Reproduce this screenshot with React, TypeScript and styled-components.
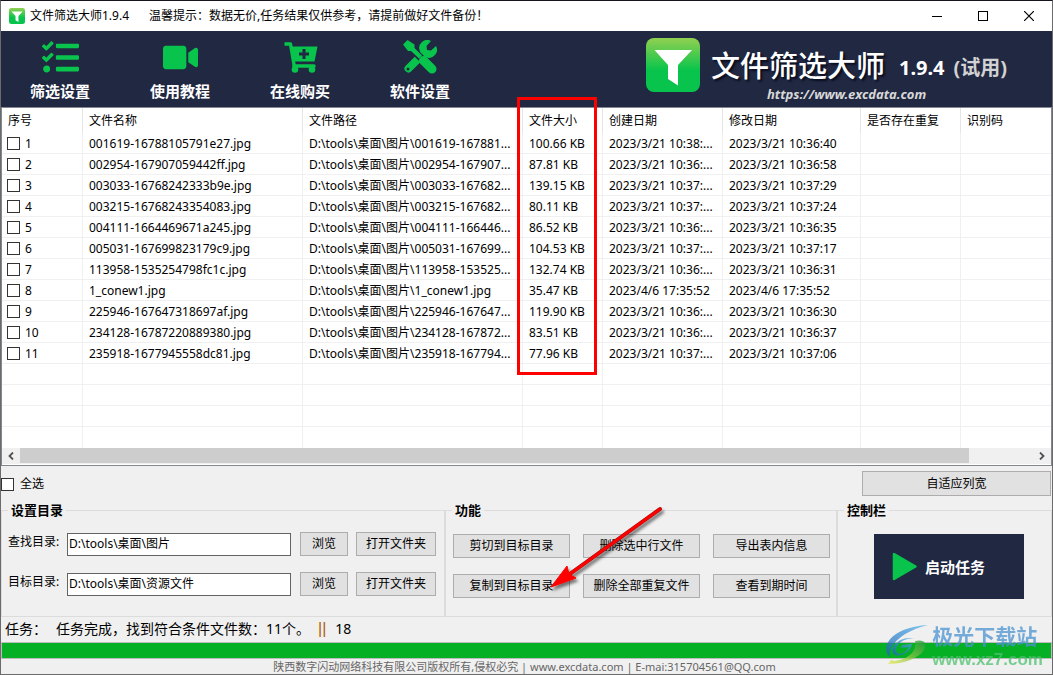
import React from 'react';
import styled, { createGlobalStyle } from 'styled-components';
import { FaTasks, FaVideo } from 'react-icons/fa';

const GlobalStyle = createGlobalStyle`
  *, *::before, *::after { box-sizing: border-box; }
  html, body { margin: 0; padding: 0; background: #f0f0f0; }
  body, button, input {
    font-family: "Noto Sans", "Noto Sans CJK SC", sans-serif;
    font-size: 12px;
    line-height: 16px;
    color: #000;
  }
`;

const NAVY = '#212842';
const GREEN = '#08c44c';

const Window = styled.div`
  position: relative;
  display: flex;
  flex-direction: column;
  min-height: 100vh;
  min-width: 1024px;
  overflow: hidden;
  border: 1px solid #6b6b6b;
  border-top-color: #15141c;
  background: #f0f0f0;
`;

const TitleBar = styled.header`
  display: flex;
  align-items: center;
  height: 30px;
  padding-left: 8px;
  background: #fff;
`;

const TitleText = styled.h1`
  margin: 0 0 0 5px;
  font-size: 12px;
  font-weight: 400;
`;

const Hint = styled.p`
  flex: 1;
  margin: 0 0 0 20px;
`;

const WindowButton = styled.button`
  display: grid;
  place-items: center;
  width: 46px;
  height: 30px;
  padding: 0;
  border: 0;
  background: transparent;
`;

const Toolbar = styled.div`
  display: flex;
  height: 76px;
  background: ${NAVY};
`;

const Tools = styled.nav`
  display: flex;
  flex: 1;
`;

const ToolButton = styled.button`
  display: flex;
  flex-direction: column;
  align-items: center;
  width: 120px;
  padding: 8px 2px 0 0;
  border: 0;
  background: transparent;
  color: #fff;
  font-size: 15px;
  font-weight: 700;
  line-height: 20px;
`;

const ToolIcon = styled.span`
  display: grid;
  place-items: center;
  height: 36px;
  margin-bottom: 6px;
  color: ${GREEN};
  svg { display: block; }
`;

const Brand = styled.div`
  display: flex;
  gap: 11px;
  width: 406px;
  padding-top: 7px;
`;

const BrandText = styled.div`
  display: flex;
  flex-direction: column;
  padding-top: 7px;
`;

const BrandLine = styled.div`
  display: flex;
  align-items: center;
  gap: 9px;
  height: 42px;
  white-space: nowrap;
`;

const BrandName = styled.span`
  width: 179px;
  font-size: 29px;
  line-height: 36px;
  color: #fff;
  font-weight: 500;
  text-shadow: 2px 2px 2px #0a0e1c;
`;

const Version = styled.strong<{ $dim?: boolean }>`
  padding-top: 4px;
  font-size: 20px;
  line-height: 28px;
  color: ${(p) => (p.$dim ? '#d2d2d2' : '#fff')};
`;

const SiteLink = styled.a`
  margin-left: 56px;
  font-size: 13px;
  font-weight: 700;
  font-style: italic;
  line-height: 14px;
  color: #d8d8d8;
  text-decoration: none;
`;

const ListView = styled.section`
  display: flex;
  flex-direction: column;
  border: 1px solid #828790;
  padding-bottom: 1px;
  background: #fff;
`;

const FileTable = styled.table`
  width: 100%;
  table-layout: fixed;
  border-collapse: separate;
  border-spacing: 0;
`;

const HeadCell = styled.th`
  height: 25px;
  padding: 0 6px;
  border-right: 1px solid #e5e5e5;
  text-align: left;
  font-weight: 400;
  white-space: nowrap;
  &:last-child { border-right: 0; }
`;

const Cell = styled.td`
  height: 21px;
  padding: 1px 5px 0 6px;
  border-right: 1px solid #f0f0f0;
  border-bottom: 1px solid #f0f0f0;
  line-height: 19px;
  white-space: nowrap;
  overflow: hidden;
  &:first-child { padding-left: 5px; }
  &:last-child { border-right: 0; }
`;

const FillerRow = styled.tr`
  &:last-child td { border-bottom: 0; }
`;

const CheckLabel = styled.label`
  display: flex;
  align-items: center;
  gap: 5px;
`;

const CheckBox = styled.input`
  appearance: none;
  width: 13px;
  height: 13px;
  margin: 0;
  border: 1px solid #333;
  background: #fff;
  &:checked { background: ${GREEN}; }
`;

const ScrollBar = styled.div`
  display: flex;
  height: 16px;
  background: #f0f0f0;
`;

const ScrollArrow = styled.button`
  display: grid;
  place-items: center;
  width: 18px;
  padding: 0;
  border: 0;
  background: transparent;
`;

const ScrollTrack = styled.div`
  flex: 1;
  padding-right: 64px;
`;

const ScrollThumb = styled.div`
  height: 15px;
  background: #cdcdcd;
`;

const SelectRow = styled.div`
  display: flex;
  justify-content: space-between;
  height: 34px;
  padding: 5px 1px 0 0;
`;

const SelectAll = styled(CheckLabel)`
  gap: 6px;
  height: 26px;
`;

const PushButton = styled.button<{ $w: number }>`
  width: ${(p) => p.$w}px;
  height: 24px;
  padding: 0;
  border: 1px solid #adadad;
  background: #e1e1e1;
  white-space: nowrap;
`;

const WideButton = styled(PushButton)`
  height: 25px;
`;

const Panels = styled.div`
  display: grid;
  grid-template-columns: 444px 392px 1fr;
`;

const Panel = styled.fieldset`
  min-width: 0;
  height: 117px;
  margin: 0;
  padding: 0 0 0 6px;
  border: 1px solid #dcdcdc;
`;

const Legend = styled.legend`
  height: 20px;
  padding: 0 3px;
  font-size: 13px;
  font-weight: 700;
  line-height: 20px;
`;

const PathRows = styled.div`
  display: flex;
  flex-direction: column;
  gap: 16px;
  padding-top: 12px;
`;

const PathRow = styled.div`
  display: flex;
  align-items: center;
`;

const PathLabel = styled.label`
  width: 59px;
  padding-bottom: 4px;
`;

const PathInput = styled.input`
  width: 224px;
  height: 23px;
  margin-right: 9px;
  padding: 0 1px 2px;
  border: 1px solid #646464;
  background: #fff;
`;

const OpenButton = styled(PushButton)`
  margin-left: 8px;
`;

const ActionGrid = styled.div`
  display: grid;
  grid-template-columns: repeat(3, 117px);
  gap: 16px 13px;
  padding: 14px 0 0 1px;
`;

const StartButton = styled.button`
  display: flex;
  align-items: center;
  gap: 8px;
  width: 150px;
  height: 65px;
  margin: 14px 0 0 30px;
  padding: 0 0 0 18px;
  border: 0;
  background: ${NAVY};
  color: #fff;
  font-size: 15px;
  font-weight: 700;
`;

const Status = styled.div`
  display: flex;
  align-items: center;
  height: 25px;
  padding: 0 0 2px 4px;
  font-size: 14px;
  line-height: 20px;
  white-space: pre;
`;

const StatusText = styled.span`
  margin-left: 9px;
`;

const Divider = styled.span`
  margin: 0 9px 0 8px;
  font-family: "Liberation Sans", sans-serif;
  font-size: 16px;
  color: #b06000;
`;

const Progress = styled.div`
  height: 17px;
  border: 1px solid #bcbcbc;
  background: #06b025;
`;

const Footer = styled.footer`
  padding-right: 4px;
  text-align: center;
  font-size: 11px;
  line-height: 15px;
  color: #666;
`;

const Highlight = styled.div`
  position: absolute;
  left: 516px;
  top: 96px;
  width: 80px;
  height: 278px;
  border: 3px solid #fe0000;
  pointer-events: none;
`;

const Arrow = styled.svg`
  position: absolute;
  left: 544px;
  top: 499px;
  pointer-events: none;
`;

const Watermark = styled.div`
  position: absolute;
  right: 9px;
  bottom: 5px;
  display: flex;
  align-items: center;
  gap: 2px;
  opacity: 0.75;
  pointer-events: none;
`;

const WatermarkText = styled.div`
  display: flex;
  flex-direction: column;
  font-weight: 700;
`;

const WatermarkName = styled.span`
  font-size: 21px;
  line-height: 30px;
  color: #4b93d1;
`;

const WatermarkSite = styled.span`
  font-family: "Liberation Sans", sans-serif;
  font-size: 17px;
  line-height: 18px;
  color: #4fc070;
`;

function FunnelLogo({ size }: { size: number }) {
  const id = `logo-${size}`;
  return (
    <svg width={size} height={size} viewBox="0 0 54 54" aria-hidden="true">
      <defs>
        <linearGradient id={id} x1="0" y1="0" x2="0" y2="1">
          <stop offset="0" stopColor="#92d050" />
          <stop offset="0.6" stopColor="#08c44c" />
        </linearGradient>
      </defs>
      <rect width="54" height="54" rx="8" fill={`url(#${id})`} />
      <path d="M8.500 12h37.500L32 27v20.500L22 41V27z" fill="#fff" />
    </svg>
  );
}

function CartIcon() {
  return (
    <svg width="35" height="31" viewBox="0 0 35 31" aria-hidden="true">
      <path d="M1.500 2h6L11.500 25.500" fill="none" stroke="currentColor" strokeWidth="3.400" strokeLinejoin="round" />
      <path d="M8.500 4.500h26L31.500 19.500H11z" fill="currentColor" />
      <path d="M11 24h20" stroke="currentColor" strokeWidth="3.500" strokeLinecap="round" />
      <circle cx="12" cy="27.500" r="3.300" fill="currentColor" />
      <circle cx="29" cy="27.500" r="3.300" fill="currentColor" />
      <path d="M21 7v10M16 12h10" stroke={NAVY} strokeWidth="3" />
    </svg>
  );
}

function ToolsIcon() {
  return (
    <svg width="34" height="34" viewBox="0 0 34 34" aria-hidden="true">
      <path d="M18.500 15.500L5.500 28.500" stroke="currentColor" strokeWidth="8" strokeLinecap="round" />
      <path d="M17 11.500a8 8 0 0 1 11-10.500l-4.500 5 .5 4 4 .5 5-4.500a8 8 0 0 1-10.500 11z" fill="currentColor" />
      <circle cx="5" cy="29" r="1.500" fill={NAVY} />
      <path d="M3 3l28 28" stroke={NAVY} strokeWidth="7" />
      <path d="M0 4.500L4.500 0l7 4.500v3.500L19 15.500l-3 3L8 11H5z" fill="currentColor" />
      <path d="M20.500 20.500l8.500 8.500" stroke="currentColor" strokeWidth="9" strokeLinecap="round" />
    </svg>
  );
}

const tools = [
  { label: '筛选设置', icon: <FaTasks size={37} /> },
  { label: '使用教程', icon: <FaVideo size={35} /> },
  { label: '在线购买', icon: <CartIcon /> },
  { label: '软件设置', icon: <ToolsIcon /> },
];

const columns = [
  { label: '序号', width: 81 },
  { label: '文件名称', width: 220 },
  { label: '文件路径', width: 220 },
  { label: '文件大小', width: 80 },
  { label: '创建日期', width: 120 },
  { label: '修改日期', width: 138 },
  { label: '是否存在重复', width: 100 },
  { label: '识别码' },
];

const files = [
  ['001619-16788105791e27.jpg', '001619-167881...', '100.66 KB', '2023/3/21 10:38:...', '2023/3/21 10:36:40'],
  ['002954-167907059442ff.jpg', '002954-167907...', '87.81 KB', '2023/3/21 10:36:...', '2023/3/21 10:36:58'],
  ['003033-16768242333b9e.jpg', '003033-167682...', '139.15 KB', '2023/3/21 10:37:...', '2023/3/21 10:37:29'],
  ['003215-16768243354083.jpg', '003215-167682...', '80.11 KB', '2023/3/21 10:37:...', '2023/3/21 10:37:24'],
  ['004111-1664469671a245.jpg', '004111-166446...', '86.52 KB', '2023/3/21 10:36:...', '2023/3/21 10:36:35'],
  ['005031-167699823179c9.jpg', '005031-167699...', '104.53 KB', '2023/3/21 10:37:...', '2023/3/21 10:37:17'],
  ['113958-1535254798fc1c.jpg', '113958-153525...', '132.74 KB', '2023/3/21 10:36:...', '2023/3/21 10:36:31'],
  ['1_conew1.jpg', '1_conew1.jpg', '35.47 KB', '2023/4/6 17:35:52', '2023/4/6 17:35:52'],
  ['225946-167647318697af.jpg', '225946-167647...', '119.90 KB', '2023/3/21 10:36:...', '2023/3/21 10:36:30'],
  ['234128-16787220889380.jpg', '234128-167872...', '83.51 KB', '2023/3/21 10:36:...', '2023/3/21 10:36:37'],
  ['235918-1677945558dc81.jpg', '235918-167794...', '77.96 KB', '2023/3/21 10:37:...', '2023/3/21 10:37:06'],
];

const actions = [
  '剪切到目标目录', '删除选中行文件', '导出表内信息',
  '复制到目标目录', '删除全部重复文件', '查看到期时间',
];

const paths = [
  { id: 'source', label: '查找目录:', value: 'D:\\tools\\桌面\\图片' },
  { id: 'target', label: '目标目录:', value: 'D:\\tools\\桌面\\资源文件' },
];

export default function App() {
  return (
    <Window>
      <GlobalStyle />
      <TitleBar>
        <FunnelLogo size={16} />
        <TitleText>文件筛选大师1.9.4</TitleText>
        <Hint>温馨提示：数据无价,任务结果仅供参考，请提前做好文件备份！</Hint>
        <WindowButton aria-label="最小化">
          <svg width="10" height="10"><path d="M0 5.500h10" stroke="#000" /></svg>
        </WindowButton>
        <WindowButton aria-label="最大化">
          <svg width="10" height="10"><rect x="0.500" y="0.500" width="9" height="9" fill="none" stroke="#000" /></svg>
        </WindowButton>
        <WindowButton aria-label="关闭">
          <svg width="10" height="10"><path d="M0 0l10 10M10 0L0 10" stroke="#000" strokeWidth="1.200" /></svg>
        </WindowButton>
      </TitleBar>

      <Toolbar>
        <Tools>
          {tools.map((t) => (
            <ToolButton key={t.label}>
              <ToolIcon>{t.icon}</ToolIcon>
              {t.label}
            </ToolButton>
          ))}
        </Tools>
        <Brand>
          <FunnelLogo size={54} />
          <BrandText>
            <BrandLine>
              <BrandName>文件筛选大师</BrandName>
              <Version>1.9.4</Version>
              <Version $dim>(试用)</Version>
            </BrandLine>
            <SiteLink href="https://www.excdata.com">https://www.excdata.com</SiteLink>
          </BrandText>
        </Brand>
      </Toolbar>

      <ListView>
        <FileTable>
          <colgroup>
            {columns.map((c) => <col key={c.label} width={c.width} />)}
          </colgroup>
          <thead>
            <tr>{columns.map((c) => <HeadCell key={c.label} scope="col">{c.label}</HeadCell>)}</tr>
          </thead>
          <tbody>
            {files.map(([name, path, size, created, modified], i) => (
              <tr key={name}>
                <Cell>
                  <CheckLabel><CheckBox type="checkbox" />{i + 1}</CheckLabel>
                </Cell>
                <Cell>{name}</Cell>
                <Cell>{`D:\\tools\\桌面\\图片\\${path}`}</Cell>
                <Cell>{size}</Cell>
                <Cell>{created}</Cell>
                <Cell>{modified}</Cell>
                <Cell />
                <Cell />
              </tr>
            ))}
            {[0, 1, 2, 3].map((r) => (
              <FillerRow key={r}>
                {columns.map((c) => <Cell key={c.label} />)}
              </FillerRow>
            ))}
          </tbody>
        </FileTable>
        <ScrollBar>
          <ScrollArrow aria-label="向左滚动">
            <svg width="6" height="8"><path d="M5 0.500L1.500 4L5 7.500" fill="none" stroke="#505050" strokeWidth="1.800" /></svg>
          </ScrollArrow>
          <ScrollTrack><ScrollThumb /></ScrollTrack>
          <ScrollArrow aria-label="向右滚动">
            <svg width="6" height="8"><path d="M1 0.500L4.500 4L1 7.500" fill="none" stroke="#505050" strokeWidth="1.800" /></svg>
          </ScrollArrow>
        </ScrollBar>
      </ListView>

      <SelectRow>
        <SelectAll><CheckBox type="checkbox" />全选</SelectAll>
        <WideButton $w={189}>自适应列宽</WideButton>
      </SelectRow>

      <Panels>
        <Panel>
          <Legend>设置目录</Legend>
          <PathRows>
            {paths.map((p) => (
              <PathRow key={p.id}>
                <PathLabel htmlFor={p.id}>{p.label}</PathLabel>
                <PathInput id={p.id} defaultValue={p.value} />
                <PushButton $w={48}>浏览</PushButton>
                <OpenButton $w={80}>打开文件夹</OpenButton>
              </PathRow>
            ))}
          </PathRows>
        </Panel>
        <Panel>
          <Legend>功能</Legend>
          <ActionGrid>
            {actions.map((a) => <PushButton key={a} $w={117}>{a}</PushButton>)}
          </ActionGrid>
        </Panel>
        <Panel>
          <Legend>控制栏</Legend>
          <StartButton>
            <svg width="25" height="29" viewBox="0 0 25 29" aria-hidden="true">
              <path d="M2 2v25L23.500 14.500z" fill={GREEN} stroke={GREEN} strokeWidth="2.500" strokeLinejoin="round" />
            </svg>
            启动任务
          </StartButton>
        </Panel>
      </Panels>

      <Status>
        任务：<StatusText>任务完成，找到符合条件文件数：11个。</StatusText>
        <Divider>||</Divider>18
      </Status>
      <Progress role="progressbar" aria-valuenow={100} />
      <Footer>陕西数字闪动网络科技有限公司版权所有,侵权必究 | www.excdata.com | E-mai:315704561@QQ.com</Footer>

      <Highlight />
      <Arrow width="125" height="95" viewBox="0 0 125 95" aria-hidden="true">
        <defs>
          <filter id="arrow-shadow" x="-20%" y="-20%" width="140%" height="140%">
            <feDropShadow dx="2" dy="3" stdDeviation="1.500" floodColor="#000" floodOpacity="0.5" />
          </filter>
        </defs>
        <g filter="url(#arrow-shadow)">
          <path d="M115 9L22 76" stroke="#8c1010" strokeWidth="4" strokeLinecap="round" />
          <path d="M115 9L22 76" stroke="#fe0000" strokeWidth="3" strokeLinecap="round" />
          <path d="M6 87L22 66l2 8 7 4z" fill="#fe0000" stroke="#fe0000" strokeWidth="1" />
        </g>
      </Arrow>
      <Watermark>
        <svg width="46" height="42" viewBox="0 0 46 42" aria-hidden="true">
          <defs>
            <linearGradient id="wm-blue" x1="1" y1="0" x2="0" y2="1">
              <stop offset="0" stopColor="#58b8ee" />
              <stop offset="1" stopColor="#1d62b4" />
            </linearGradient>
            <linearGradient id="wm-green" x1="1" y1="0" x2="0" y2="1">
              <stop offset="0" stopColor="#1f9a3c" />
              <stop offset="1" stopColor="#e8ea50" />
            </linearGradient>
          </defs>
          <path d="M44 1C22 2 4 11 2 24c0 4 1 7 4 9C4 20 20 7 44 1z" fill="url(#wm-blue)" />
          <path d="M32 15c-10-2-20 4-20 11 0 5 8 6 13-3l-8 1 1-3 10-1c-2 9-11 13-17 11C3 26 15 10 32 15z" fill="url(#wm-blue)" />
          <path d="M31 17c9-2 13 2 9 9C35 34 20 40 4 40l3-4 3 1c12-1 24-9 21-20z" fill="url(#wm-green)" />
        </svg>
        <WatermarkText>
          <WatermarkName>极光下载站</WatermarkName>
          <WatermarkSite>www.xz7.com</WatermarkSite>
        </WatermarkText>
      </Watermark>
    </Window>
  );
}
